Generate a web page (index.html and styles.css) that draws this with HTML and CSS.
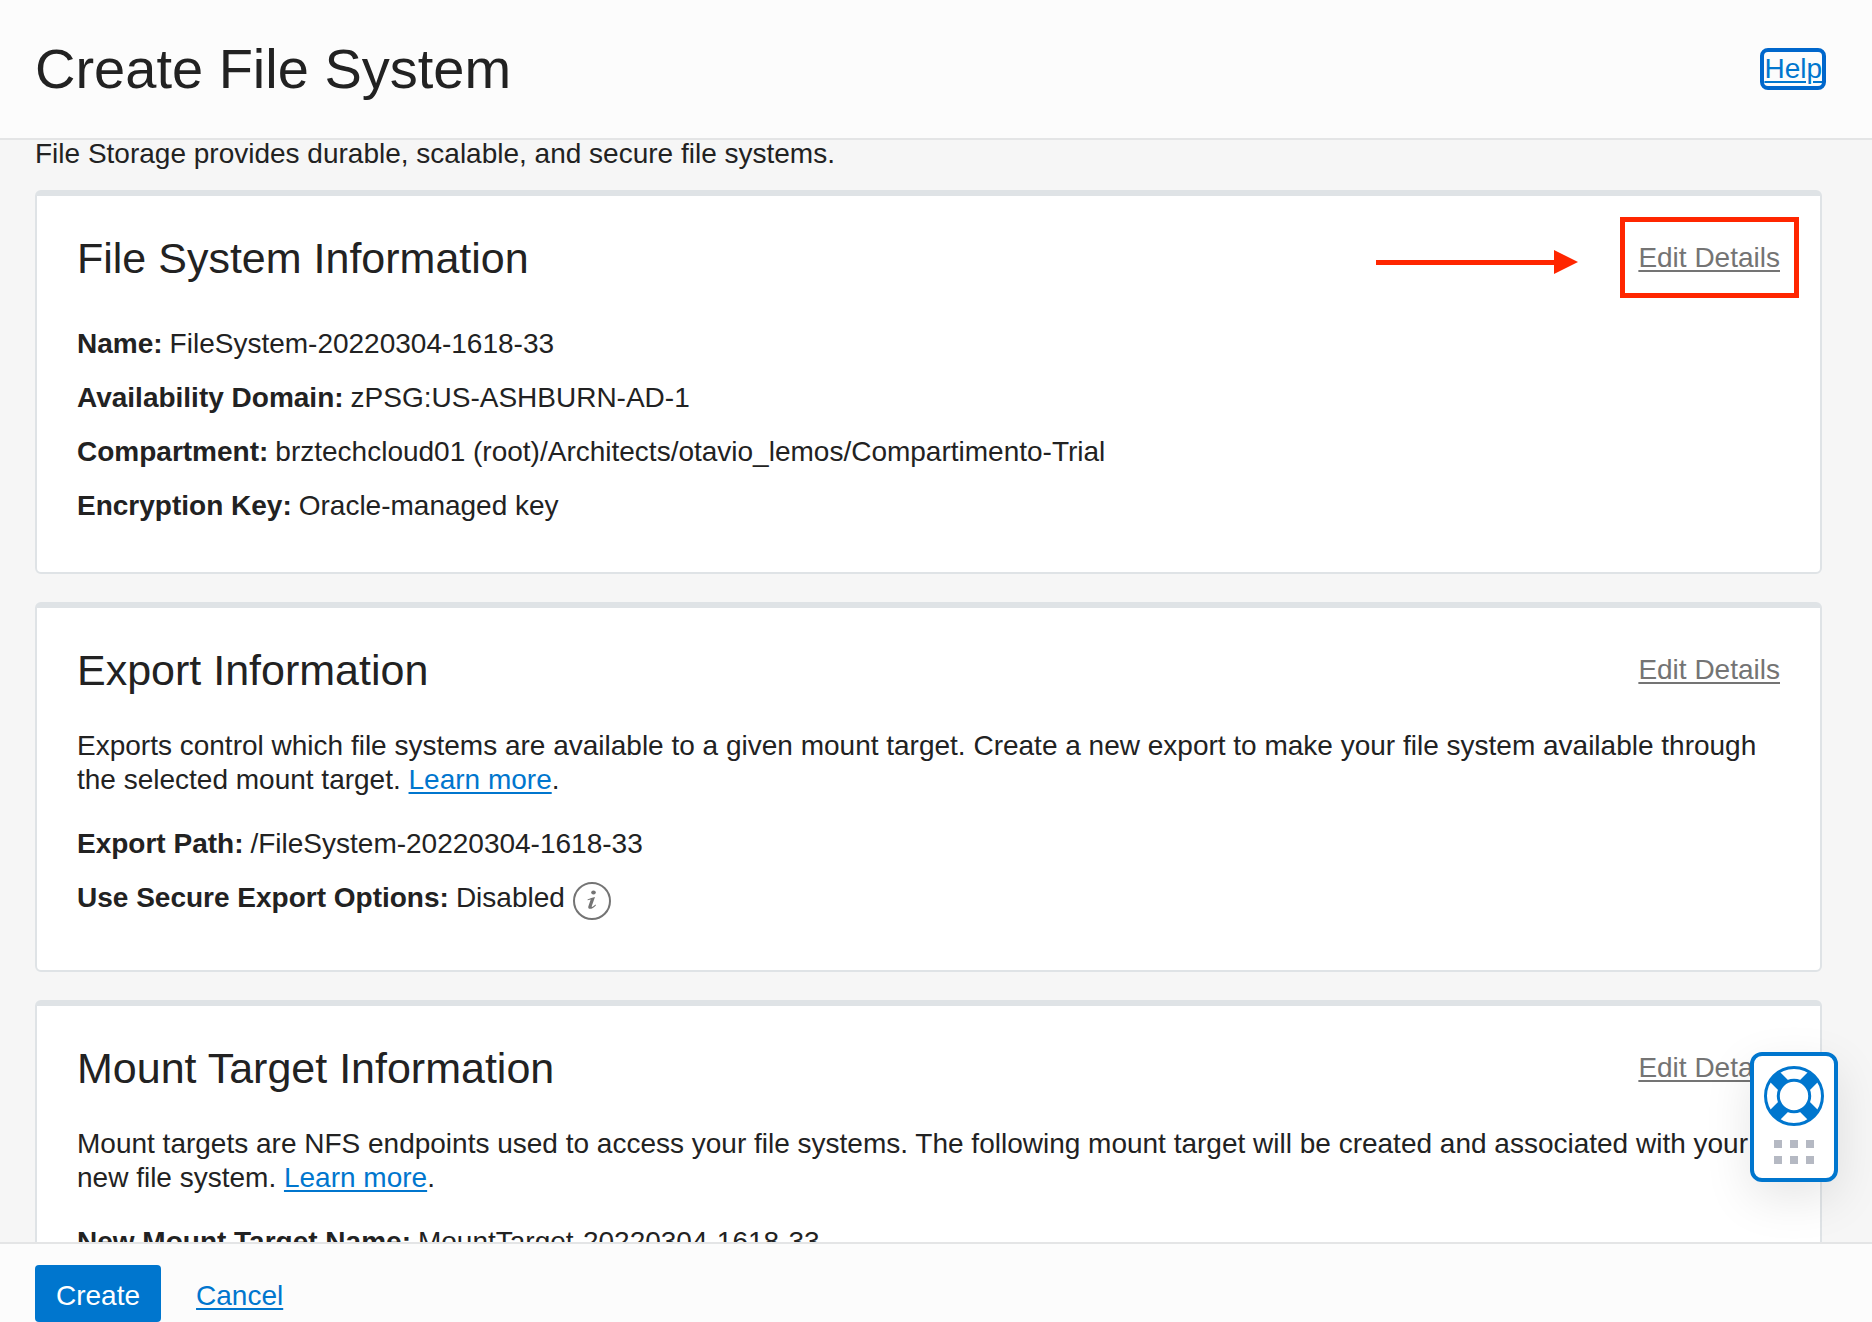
FILE: index.html
```html
<!DOCTYPE html>
<html lang="en">
<head>
<meta charset="utf-8">
<meta name="viewport" content="width=device-width, initial-scale=1">
<title>Create File System</title>
<link rel="stylesheet" href="styles.css">
</head>
<body>
<header class="topbar">
  <h1 class="title">Create File System</h1>
  <a class="help" href="#">Help</a>
</header>

<main class="content">
  <p class="intro">File Storage provides durable, scalable, and secure file systems.</p>

  <section class="card">
    <div class="card-head">
      <h2 class="card-title">File System Information</h2>
      <div class="callout">
        <svg class="callout-arrow" viewBox="0 0 202 24" aria-hidden="true"><path d="M0 10H178V0L202 12L178 24V15H0Z" fill="#ff2600"/></svg>
        <a class="edit" href="#">Edit Details</a>
        <span class="callout-box"></span>
      </div>
    </div>
    <dl class="facts facts-first">
      <div class="fact"><dt>Name:</dt> <dd>FileSystem-20220304-1618-33</dd></div>
      <div class="fact"><dt>Availability Domain:</dt> <dd>zPSG:US-ASHBURN-AD-1</dd></div>
      <div class="fact"><dt>Compartment:</dt> <dd>brztechcloud01 (root)/Architects/otavio_lemos/Compartimento-Trial</dd></div>
      <div class="fact"><dt>Encryption Key:</dt> <dd>Oracle-managed key</dd></div>
    </dl>
  </section>

  <section class="card">
    <div class="card-head">
      <h2 class="card-title">Export Information</h2>
      <a class="edit" href="#">Edit Details</a>
    </div>
    <p class="text">Exports control which file systems are available to a given mount target. Create a new export to make your file system available through the selected mount target. <a href="#">Learn more</a>.</p>
    <dl class="facts">
      <div class="fact"><dt>Export Path:</dt> <dd>/FileSystem-20220304-1618-33</dd></div>
      <div class="fact">
        <dt>Use Secure Export Options:</dt> <dd>Disabled</dd>
        <dd><button class="info" type="button" aria-label="More information">
          <svg viewBox="0 0 40 40" aria-hidden="true"><circle cx="20" cy="20" r="18" fill="none" stroke="#747474" stroke-width="2"/><ellipse cx="21.500" cy="11.500" rx="2.300" ry="1.900" fill="#747474"/><path d="M15.500 18.500C18 17.300 20.500 16.500 23 16L19.800 25C19.400 26.400 20.500 26.400 23.500 23.500L24 24.200C21 28 15.500 29.500 16.300 25.500L18.700 18.600L15.700 19.300Z" fill="#747474"/></svg>
        </button></dd>
      </div>
    </dl>
  </section>

  <section class="card">
    <div class="card-head">
      <h2 class="card-title">Mount Target Information</h2>
      <a class="edit" href="#">Edit Details</a>
    </div>
    <p class="text">Mount targets are NFS endpoints used to access your file systems. The following mount target will be created and associated with your new file system. <a href="#">Learn more</a>.</p>
    <dl class="facts">
      <div class="fact"><dt>New Mount Target Name:</dt> <dd>MountTarget-20220304-1618-33</dd></div>
    </dl>
  </section>
</main>

<footer class="actions">
  <button class="create" type="button">Create</button>
  <a class="cancel" href="#">Cancel</a>
</footer>

<button class="support" type="button" aria-label="Support">
  <svg class="buoy" viewBox="0 0 60 60" aria-hidden="true">
    <circle cx="30" cy="30" r="28.500" fill="#fff" stroke="#0076ce" stroke-width="3"/>
    <path d="M10.500 10.500L49.500 49.500M49.500 10.500L10.500 49.500" stroke="#0076ce" stroke-width="14"/>
    <circle cx="30" cy="30" r="15.700" fill="#fff" stroke="#0076ce" stroke-width="3"/>
  </svg>
  <svg class="dots" viewBox="0 0 40 24" aria-hidden="true"><path d="M0 0h8v8H0zM16 0h8v8h-8zM32 0h8v8h-8zM0 16h8v8H0zM16 16h8v8h-8zM32 16h8v8h-8z" fill="#b5b9c3"/></svg>
</button>
</body>
</html>
```
FILE: styles.css
```css
* {
  box-sizing: border-box;
}

body {
  margin: 0;
  height: 100vh;
  display: flex;
  flex-direction: column;
  overflow: hidden;
  background: #f6f6f6;
  color: #222;
  font: 28px/34px "Liberation Sans", Arial, sans-serif;
}

h1, h2, p, dl, dd {
  margin: 0;
}

a {
  color: #0076ce;
  text-decoration-thickness: 2px;
  text-underline-offset: 3px;
}

button {
  font: inherit;
  cursor: pointer;
}

.topbar {
  flex: none;
  display: flex;
  align-items: center;
  justify-content: space-between;
  padding: 37px 50px 37px 35px;
  background: #fcfcfc;
  border-bottom: 2px solid #e4e5e6;
}

.title {
  font-size: 56px;
  line-height: 64px;
  font-weight: 400;
}

.help {
  border-radius: 4px;
  outline: 4px solid #0067cc;
}

.content {
  flex: 1;
  min-height: 0;
  overflow: hidden;
  padding: 0 50px 0 35px;
}

.intro {
  line-height: 28px;
  margin-bottom: 22px;
}

.card {
  margin-bottom: 28px;
  padding: 37px 40px 49px;
  background: #fff;
  border: 2px solid #dfe3e6;
  border-top-width: 6px;
  border-radius: 6px;
}

.card-head {
  display: flex;
  align-items: center;
  justify-content: space-between;
  margin-bottom: 34px;
}

.card-title {
  font-size: 43px;
  line-height: 50px;
  font-weight: 400;
}

.edit {
  color: #747474;
}

.callout {
  position: relative;
  display: flex;
  align-items: center;
  gap: 60px;
}

.callout-arrow {
  width: 202px;
  height: 24px;
  margin-top: 8px;
}

.callout-box {
  position: absolute;
  top: -24px;
  right: -19px;
  width: 179px;
  height: 81px;
  border: 5px solid #ff2600;
  pointer-events: none;
}

.text {
  margin-bottom: 30px;
}

.facts {
  display: flex;
  flex-direction: column;
  gap: 20px;
}

.facts-first {
  padding-top: 10px;
}

.fact {
  display: flex;
  gap: 7px;
}

.fact dt {
  font-weight: 700;
}

.info {
  display: block;
  width: 40px;
  height: 40px;
  padding: 0;
  border: 0;
  background: none;
}

.info svg {
  display: block;
}

.actions {
  flex: none;
  display: flex;
  align-items: center;
  gap: 35px;
  padding: 21px 35px 0;
  background: #fcfcfc;
  border-top: 2px solid #e4e5e6;
}

.create {
  padding: 14px 21px 9px;
  border: 0;
  border-radius: 4px;
  background: #0076ce;
  color: #fff;
}

.cancel {
  padding-top: 5px;
}

.support {
  position: fixed;
  right: 34px;
  bottom: 140px;
  width: 88px;
  height: 130px;
  display: flex;
  flex-direction: column;
  align-items: center;
  gap: 14px;
  padding: 10px 0 0;
  border: 4px solid #0076ce;
  border-radius: 12px;
  background: #fff;
  box-shadow: 0 16px 48px rgba(0, 0, 0, 0.1);
}

.buoy {
  width: 60px;
  height: 60px;
}

.dots {
  width: 40px;
  height: 24px;
}
```
